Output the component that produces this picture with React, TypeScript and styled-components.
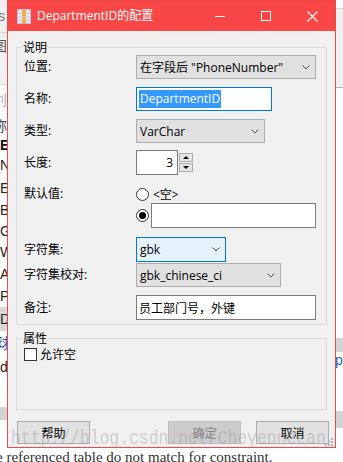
import React from "react";
import styled, { createGlobalStyle } from "styled-components";

const FONT = `"Open Sans", "Noto Sans CJK SC", sans-serif`;

const GlobalStyle = createGlobalStyle`
  html, body { margin: 0; padding: 0; }
  body { background: #fff; overflow: hidden; }
  *, *::before, *::after { box-sizing: border-box; }
`;

const Screen = styled.div`
  position: relative;
  width: 343px;
  height: 462px;
  overflow: hidden;
  font-family: ${FONT};
  font-size: 12px;
  color: #000;
`;

/* ---------- background application ---------- */
const Backdrop = styled.div`
  display: grid;
  grid-template-columns: 7px 1fr 8px;
  grid-template-rows: 448px 14px;
  width: 343px;
  height: 462px;
  background: #fff;
`;

const Pane = styled.div`
  display: flex;
  flex-direction: column;
  overflow: hidden;
`;

const BgRow = styled.div<{
  $h: number;
  $bg?: string;
  $color?: string;
  $bold?: boolean;
  $shift?: number;
  $line?: string;
}>`
  flex: none;
  height: ${(p) => p.$h}px;
  background: ${(p) => p.$bg ?? "transparent"};
  border-bottom: ${(p) => (p.$line ? `1px solid ${p.$line}` : "none")};
  color: ${(p) => p.$color ?? "#222"};
  font-family: "Liberation Sans", "Noto Sans CJK SC", sans-serif;
  font-weight: ${(p) => (p.$bold ? 700 : 400)};
  font-size: 14px;
  line-height: ${(p) => p.$h}px;
  white-space: nowrap;
  text-indent: ${(p) => p.$shift ?? 0}px;
  overflow: hidden;
`;

const BottomText = styled.div`
  grid-column: 1 / -1;
  font-family: "Liberation Serif", serif;
  font-size: 15px;
  line-height: 14px;
  padding-top: 2px;
  text-indent: -4px;
  color: #333;
  white-space: nowrap;
  overflow: hidden;
`;

/* ---------- dialog window ---------- */
const Dialog = styled.div`
  position: absolute;
  left: 7px;
  top: 0;
  width: 329px;
  height: 448px;
  border: 1px solid #ec4a4a;
  background: #f0f0f0;
  display: flex;
  flex-direction: column;
`;

const TitleBar = styled.div`
  flex: none;
  height: 30px;
  background: #f94646;
  color: #fff;
  display: flex;
  align-items: center;
  padding-left: 9px;
`;

const TitleText = styled.span`
  margin-left: 6px;
  flex: 1;
  font-size: 12px;
  line-height: 16px;
  white-space: nowrap;
`;

const CaptionButton = styled.div`
  width: 46px;
  height: 30px;
  display: flex;
  align-items: center;
  justify-content: center;
`;

const Body = styled.div`
  flex: 1;
  display: flex;
  flex-direction: column;
  padding: 16px 8px 2px 8px;
`;

const GroupBox = styled.div<{ $h?: number; $pad: string }>`
  position: relative;
  flex: none;
  border: 1px solid #dcdcdc;
  padding: ${(p) => p.$pad};
  ${(p) => (p.$h ? `height: ${p.$h}px;` : "")}
`;

const GroupSpacer = styled.div`
  height: 13px;
  flex: none;
`;

const Legend = styled.span`
  position: absolute;
  top: -8px;
  left: 5px;
  padding: 0 1px;
  background: #f0f0f0;
  line-height: 15px;
`;

const FormRow = styled.div<{ $gap: number; $h: number; $top?: boolean }>`
  display: grid;
  grid-template-columns: 112px auto;
  align-items: ${(p) => (p.$top ? "start" : "center")};
  margin-top: ${(p) => p.$gap}px;
  min-height: ${(p) => p.$h}px;
`;

const Label = styled.span`
  line-height: 16px;
  white-space: nowrap;
`;

const Combo = styled.div<{ $w: number; $h: number; $focus?: boolean }>`
  display: flex;
  align-items: center;
  justify-content: space-between;
  width: ${(p) => p.$w}px;
  height: ${(p) => p.$h}px;
  padding: 0 5px 0 3px;
  border: 1px solid ${(p) => (p.$focus ? "#0078d7" : "#adadad")};
  background: ${(p) => (p.$focus ? "#e5f1fb" : "#e1e1e1")};
  white-space: nowrap;
`;

const TextBox = styled.div<{ $w: number; $h: number; $focus?: boolean; $right?: boolean }>`
  display: flex;
  align-items: center;
  justify-content: ${(p) => (p.$right ? "flex-end" : "flex-start")};
  width: ${(p) => p.$w}px;
  height: ${(p) => p.$h}px;
  padding: ${(p) => (p.$right ? "0 4px 0 2px" : "0 2px")};
  border: 1px solid ${(p) => (p.$focus ? "#0078d7" : "#7a7a7a")};
  background: #fff;
  white-space: nowrap;
`;

const Selected = styled.span`
  background: #3399ff;
  color: #fff;
  line-height: 18px;
  padding: 0 1px;
`;

const SpinGroup = styled.div`
  display: flex;
  align-items: center;
  gap: 1px;
`;

const SpinButtons = styled.div`
  display: flex;
  flex-direction: column;
  gap: 1px;
`;

const SpinBtn = styled.div<{ $down?: boolean }>`
  width: 14px;
  height: 9px;
  border: 1px solid #adadad;
  background: #e5e5e5;
  display: flex;
  align-items: center;
  justify-content: center;
  &::after {
    content: "";
    width: 0;
    height: 0;
    border-left: 3px solid transparent;
    border-right: 3px solid transparent;
    ${(p) => (p.$down ? "border-top: 3px solid #000;" : "border-bottom: 3px solid #000;")}
  }
`;

const RadioStack = styled.div`
  display: flex;
  flex-direction: column;
  gap: 1px;
`;

const RadioLine = styled.div<{ $h: number; $gap: number }>`
  display: flex;
  align-items: center;
  gap: ${(p) => p.$gap}px;
  height: ${(p) => p.$h}px;
`;

const Radio = styled.span<{ $checked?: boolean }>`
  flex: none;
  width: 13px;
  height: 13px;
  border-radius: 50%;
  border: 1px solid #333;
  background: #fff;
  display: flex;
  align-items: center;
  justify-content: center;
  &::after {
    content: "";
    width: 7px;
    height: 7px;
    border-radius: 50%;
    background: ${(p) => (p.$checked ? "#000" : "transparent")};
  }
`;

const CheckLine = styled.div`
  display: flex;
  align-items: center;
  gap: 3px;
  height: 14px;
`;

const CheckBox = styled.span`
  width: 13px;
  height: 13px;
  border: 1px solid #333;
  background: #fff;
`;

const ButtonRow = styled.div`
  display: flex;
  margin: 11px -2px 0 1px;
  height: 23px;
`;

const Spacer = styled.div`
  flex: 1;
`;

const Btn = styled.div<{ $disabled?: boolean; $gapLeft?: number }>`
  width: 73px;
  height: 23px;
  margin-left: ${(p) => p.$gapLeft ?? 0}px;
  border: 1px solid ${(p) => (p.$disabled ? "#bfbfbf" : "#adadad")};
  background: ${(p) => (p.$disabled ? "#cccccc" : "#e1e1e1")};
  color: ${(p) => (p.$disabled ? "#838383" : "#000")};
  display: flex;
  align-items: center;
  justify-content: center;
`;

const Watermark = styled.div`
  position: absolute;
  left: 11px;
  top: 425px;
  font-family: "Liberation Mono", monospace;
  font-size: 16.4px;
  line-height: 22px;
  color: rgba(150, 150, 150, 0.4);
  white-space: nowrap;
  transform: scaleY(1.25);
  transform-origin: left top;
  pointer-events: none;
`;

const Grip = styled.svg`
  position: absolute;
  right: 2px;
  bottom: 1px;
`;

const Chevron = () => (
  <svg width="8" height="5" viewBox="0 0 8 5">
    <polyline points="0.5,0.5 4,4 7.5,0.5" fill="none" stroke="#555" strokeWidth="1" />
  </svg>
);

const TableIcon = () => (
  <svg width="14" height="15" viewBox="0 0 14 15">
    <rect x="0.5" y="0.5" width="13" height="14" fill="#e4e7f5" stroke="#b9c0dc" />
    <rect x="5" y="1" width="4" height="13" fill="#f6a640" />
    <line x1="1" y1="4.5" x2="13" y2="4.5" stroke="#c9cfe8" />
    <line x1="1" y1="8" x2="13" y2="8" stroke="#c9cfe8" />
    <line x1="1" y1="11.5" x2="13" y2="11.5" stroke="#c9cfe8" />
    <line x1="5" y1="4.5" x2="9" y2="4.5" stroke="#f0c27a" />
    <line x1="5" y1="8" x2="9" y2="8" stroke="#f0c27a" />
    <line x1="5" y1="11.5" x2="9" y2="11.5" stroke="#f0c27a" />
  </svg>
);

const leftRows: { t: string; h: number; bg?: string; color?: string; bold?: boolean; shift?: number; line?: string }[] = [
  { t: "ls", h: 33, bg: "#f0f0f0", color: "#777", shift: -5, line: "#d4d4d4" },
  { t: "图", h: 26, bg: "#f0f0f0", color: "#555", shift: -7 },
  { t: "", h: 26, bg: "#f0f0f0", line: "#d4d4d4" },
  { t: "刘", h: 31, color: "#aaa", shift: -7 },
  { t: "称", h: 20, color: "#444", shift: -7 },
  { t: "E", h: 18, bold: true, color: "#111" },
  { t: "N", h: 23 },
  { t: "Ec", h: 22 },
  { t: "Bi", h: 22 },
  { t: "G", h: 21 },
  { t: "W", h: 21 },
  { t: "A", h: 22 },
  { t: "Pl", h: 22 },
  { t: "D", h: 24, bg: "#d9d9d9" },
  { t: "球", h: 24, color: "#2b5fb8", shift: -3 },
  { t: "d", h: 24 },
  { t: "", h: 28 },
  { t: "", h: 13, bg: "#d4d4d4" },
];

const rightRows: { t: string; h: number; bg?: string; color?: string; line?: string }[] = [
  { t: "", h: 9, line: "#d8d8d8" },
  { t: "", h: 60, bg: "#f0f0f0" },
  { t: "", h: 19, bg: "#f0f0f0", line: "#a9aed0" },
  { t: "", h: 250 },
  { t: "", h: 14, bg: "#d4d4d4" },
  { t: "p", h: 16, color: "#2b5fb8" },
  { t: "", h: 43 },
  { t: "", h: 17, bg: "#d4d4d4" },
];

export default function App() {
  return (
    <>
      <GlobalStyle />
      <Screen>
        <Backdrop>
          <Pane>
            {leftRows.map((r, i) => (
              <BgRow key={i} $h={r.h} $bg={r.bg} $color={r.color} $bold={r.bold} $shift={r.shift} $line={r.line}>
                {r.t}
              </BgRow>
            ))}
          </Pane>
          <div />
          <Pane>
            {rightRows.map((r, i) => (
              <BgRow key={i} $h={r.h} $bg={r.bg} $color={r.color} $line={r.line}>
                {r.t}
              </BgRow>
            ))}
          </Pane>
          <BottomText>e referenced table do not match for constraint.</BottomText>
        </Backdrop>

        <Dialog>
          <TitleBar>
            <TableIcon />
            <TitleText>DepartmentID的配置</TitleText>
            <CaptionButton>
              <svg width="10" height="1" viewBox="0 0 10 1">
                <rect width="10" height="1" fill="#fff" />
              </svg>
            </CaptionButton>
            <CaptionButton>
              <svg width="10" height="10" viewBox="0 0 10 10">
                <rect x="0.5" y="0.5" width="9" height="9" fill="none" stroke="#fff" />
              </svg>
            </CaptionButton>
            <CaptionButton>
              <svg width="11" height="11" viewBox="0 0 11 11">
                <path d="M0.5 0.5 L10.5 10.5 M10.5 0.5 L0.5 10.5" stroke="#fff" strokeWidth="1.1" />
              </svg>
            </CaptionButton>
          </TitleBar>

          <Body>
            <GroupBox $pad="7px 0 4px 7px">
              <Legend>说明</Legend>
              <FormRow $gap={0} $h={24}>
                <Label>位置:</Label>
                <Combo $w={180} $h={24}>
                  <span>在字段后 "PhoneNumber"</span>
                  <Chevron />
                </Combo>
              </FormRow>
              <FormRow $gap={8} $h={24}>
                <Label>名称:</Label>
                <TextBox $w={136} $h={24} $focus>
                  <Selected>DepartmentID</Selected>
                </TextBox>
              </FormRow>
              <FormRow $gap={8} $h={24}>
                <Label>类型:</Label>
                <Combo $w={129} $h={24}>
                  <span>VarChar</span>
                  <Chevron />
                </Combo>
              </FormRow>
              <FormRow $gap={7} $h={25}>
                <Label>长度:</Label>
                <SpinGroup>
                  <TextBox $w={42} $h={25} $right>
                    3
                  </TextBox>
                  <SpinButtons>
                    <SpinBtn />
                    <SpinBtn $down />
                  </SpinButtons>
                </SpinGroup>
              </FormRow>
              <FormRow $gap={11} $h={42} $top>
                <Label>默认值:</Label>
                <RadioStack>
                  <RadioLine $h={16} $gap={4}>
                    <Radio />
                    <span>&lt;空&gt;</span>
                  </RadioLine>
                  <RadioLine $h={25} $gap={2}>
                    <Radio $checked />
                    <TextBox $w={165} $h={25} />
                  </RadioLine>
                </RadioStack>
              </FormRow>
              <FormRow $gap={9} $h={25}>
                <Label>字符集:</Label>
                <Combo $w={90} $h={25} $focus>
                  <span>gbk</span>
                  <Chevron />
                </Combo>
              </FormRow>
              <FormRow $gap={1} $h={24}>
                <Label>字符集校对:</Label>
                <Combo $w={145} $h={24}>
                  <span>gbk_chinese_ci</span>
                  <Chevron />
                </Combo>
              </FormRow>
              <FormRow $gap={8} $h={25}>
                <Label>备注:</Label>
                <TextBox $w={180} $h={25}>
                  <span>员工部门号，外键</span>
                </TextBox>
              </FormRow>
            </GroupBox>

            <GroupSpacer />

            <GroupBox $h={72} $pad="8px 0 0 7px">
              <Legend>属性</Legend>
              <CheckLine>
                <CheckBox />
                <span>允许空</span>
              </CheckLine>
            </GroupBox>

            <ButtonRow>
              <Btn>帮助</Btn>
              <Spacer />
              <Btn $disabled>确定</Btn>
              <Btn $gapLeft={15}>取消</Btn>
            </ButtonRow>
          </Body>

          <Grip width="8" height="8" viewBox="0 0 8 8">
            <rect x="6" y="0" width="2" height="2" fill="#b5b5b5" />
            <rect x="3" y="3" width="2" height="2" fill="#b5b5b5" />
            <rect x="6" y="3" width="2" height="2" fill="#b5b5b5" />
            <rect x="0" y="6" width="2" height="2" fill="#b5b5b5" />
            <rect x="3" y="6" width="2" height="2" fill="#b5b5b5" />
            <rect x="6" y="6" width="2" height="2" fill="#b5b5b5" />
          </Grip>
        </Dialog>

        <Watermark>http://blog.csdn.net/CheyenneLan</Watermark>
      </Screen>
    </>
  );
}
